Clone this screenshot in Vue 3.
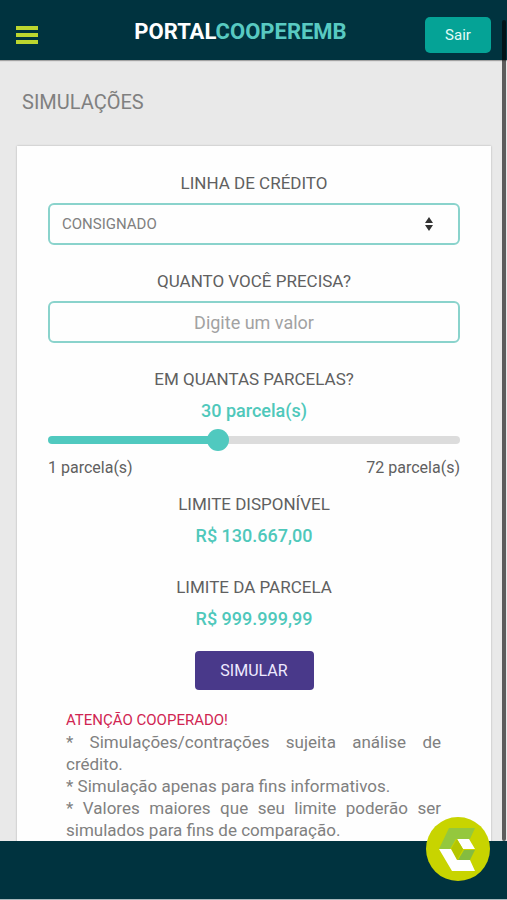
<script setup>
import { computed, ref } from 'vue'

const creditLine = ref('CONSIGNADO')
const amount = ref('')
const min = 1
const max = 72
const installments = ref(30)
const fill = computed(() => `${((installments.value - min) / (max - min)) * 100}%`)
const limits = [
  { label: 'LIMITE DISPONÍVEL', value: 'R$ 130.667,00' },
  { label: 'LIMITE DA PARCELA', value: 'R$ 999.999,99' },
]
</script>

<template>
  <div class="page">
    <header class="topbar">
      <button class="menu" type="button" aria-label="Menu">
        <span></span><span></span><span></span>
      </button>
      <div class="brand">PORTAL<span>COOPEREMB</span></div>
      <button class="logout" type="button">Sair</button>
    </header>

    <main class="content">
      <h1>SIMULAÇÕES</h1>
      <form class="card" @submit.prevent>
        <div class="field">
          <label for="line">LINHA DE CRÉDITO</label>
          <div class="select-box">
            <select id="line" v-model="creditLine">
              <option>CONSIGNADO</option>
            </select>
            <svg class="arrows" viewBox="0 0 8 14" aria-hidden="true">
              <path d="M4 0L8 6H0zM4 14L0 8h8z" fill="#333" />
            </svg>
          </div>
        </div>

        <div class="field">
          <label for="amount">QUANTO VOCÊ PRECISA?</label>
          <input id="amount" v-model="amount" class="amount" type="text" placeholder="Digite um valor">
        </div>

        <div class="installments">
          <label for="installments">EM QUANTAS PARCELAS?</label>
          <output class="value" for="installments">{{ installments }} parcela(s)</output>
          <input
            id="installments"
            v-model.number="installments"
            class="slider"
            type="range"
            :min="min"
            :max="max"
            :style="{ '--fill': fill }"
          >
          <div class="range">
            <span>{{ min }} parcela(s)</span>
            <span>{{ max }} parcela(s)</span>
          </div>
        </div>

        <dl class="limits">
          <div v-for="limit in limits" :key="limit.label">
            <dt>{{ limit.label }}</dt>
            <dd class="value">{{ limit.value }}</dd>
          </div>
        </dl>

        <button class="submit" type="submit">SIMULAR</button>

        <div class="notice">
          <strong>ATENÇÃO COOPERADO!</strong>
          <p>* Simulações/contrações sujeita análise de crédito.</p>
          <p>* Simulação apenas para fins informativos.</p>
          <p>* Valores maiores que seu limite poderão ser simulados para fins de comparação.</p>
        </div>
      </form>
    </main>

    <footer class="bottom"></footer>

    <div class="scrollbar" aria-hidden="true"></div>
    <button class="badge" type="button" aria-label="Cooperemb">
      <svg viewBox="0 0 64 64" aria-hidden="true">
        <circle cx="32" cy="32" r="32" fill="#c8d400" />
        <path d="M23 11h26l-5 11H30l-6 10H13z" fill="#94c83d" />
        <path d="M31 22h12l6 10H37z" fill="#fff" />
        <path d="M38 33h11l-5 10H32z" fill="#85bc3f" />
        <path d="M31 22l6 10-6 11-6-11z" fill="#b4c600" />
        <path d="M13 32h12l6 11h13l5 11H26z" fill="#fff" />
      </svg>
    </button>
  </div>
</template>

<style>
body {
  margin: 0;
}
</style>

<style scoped>
* {
  box-sizing: border-box;
}

.page {
  position: relative;
  display: flex;
  flex-direction: column;
  height: 100vh;
  overflow: hidden;
  background: #e9e9e9;
  color: #606060;
  font-family: Roboto, "Liberation Sans", sans-serif;
  font-size: 17px;
  line-height: 22px;
}

button,
input,
select {
  margin: 0;
  font-family: inherit;
}

.topbar {
  flex: none;
  display: grid;
  grid-template-columns: 1fr auto 1fr;
  align-items: center;
  height: 60px;
  padding: 10px 16px 0;
  background: #00333f;
  box-shadow: 0 1px 1px rgba(0, 0, 0, 0.3);
}

.menu {
  display: flex;
  flex-direction: column;
  gap: 3px;
  width: 22px;
  padding: 0;
  border: 0;
  background: none;
}

.menu span {
  height: 4px;
  background: #bdd62f;
}

.brand {
  padding: 0 26px 6px 0;
  color: #fff;
  font-size: 22px;
  font-weight: 700;
}

.brand span {
  color: #58cac2;
}

.logout {
  justify-self: end;
  width: 66px;
  height: 36px;
  border: 0;
  border-radius: 5px;
  background: #05a396;
  color: #e3fbf6;
  font-size: 15px;
}

.content {
  flex: 1;
  min-height: 0;
  overflow: hidden;
  padding: 28px 16px 0 17px;
}

h1 {
  margin: 0 5px 30px;
  color: #808080;
  font-size: 20px;
  font-weight: 400;
  line-height: 28px;
}

.card {
  display: flex;
  flex-direction: column;
  min-height: 100%;
  padding: 26px 31px 0;
  background: #fefefe;
  box-shadow: 0 0 2px rgba(0, 0, 0, 0.25);
  text-align: center;
}

.field {
  display: flex;
  flex-direction: column;
  gap: 9px;
  margin-bottom: 25px;
}

.select-box {
  display: grid;
  align-items: center;
}

.select-box > * {
  grid-area: 1 / 1;
}

select,
.amount {
  width: 100%;
  height: 42px;
  border: 2px solid #8ad3cc;
  border-radius: 6px;
  background: #fefefe;
  color: #808080;
}

select {
  appearance: none;
  padding: 0 40px 0 12px;
  font-size: 15px;
}

.arrows {
  justify-self: end;
  width: 8px;
  height: 14px;
  margin-right: 27px;
  pointer-events: none;
}

.amount {
  padding: 0 12px;
  font-size: 18px;
  text-align: center;
}

.amount::placeholder {
  color: #a2a2a2;
  opacity: 1;
}

.installments {
  display: flex;
  flex-direction: column;
}

.value {
  margin: 10px 0 0;
  color: #4fc8bb;
  font-size: 18px;
  font-weight: 500;
}

.slider {
  appearance: none;
  width: 100%;
  height: 22px;
  margin: 7px 0 6px;
  background: none;
}

.slider::-webkit-slider-runnable-track {
  height: 8px;
  border-radius: 4px;
  background: linear-gradient(to right, #50c9bf var(--fill), #dcdcdc var(--fill));
}

.slider::-webkit-slider-thumb {
  appearance: none;
  width: 22px;
  height: 22px;
  margin-top: -7px;
  border-radius: 50%;
  background: #50c9bf;
}

.range {
  display: flex;
  justify-content: space-between;
  font-size: 16px;
}

.limits {
  display: flex;
  flex-direction: column;
  gap: 29px;
  margin: 14px 0 21px;
}

.submit {
  align-self: center;
  width: 119px;
  height: 39px;
  border: 0;
  border-radius: 4px;
  background: #49398a;
  color: #eeeaff;
  font-size: 16px;
}

.notice {
  margin: 19px 19px 0 18px;
  color: #808080;
  font-size: 17px;
  text-align: justify;
}

.notice strong {
  display: block;
  color: #d02552;
  font-size: 15px;
  font-weight: 400;
}

.notice p {
  margin: 0;
}

.bottom {
  flex: none;
  height: 59px;
  border-bottom: 1px solid #a9b9bd;
  background: #00333f;
}

.scrollbar {
  position: absolute;
  top: 20px;
  right: 1px;
  bottom: 59px;
  width: 4px;
  border-radius: 2px;
  background: rgba(0, 0, 0, 0.6);
}

.badge {
  position: absolute;
  right: 17px;
  bottom: 19px;
  width: 64px;
  height: 64px;
  padding: 0;
  border: 0;
  border-radius: 50%;
  background: none;
}

.badge svg {
  display: block;
}
</style>
